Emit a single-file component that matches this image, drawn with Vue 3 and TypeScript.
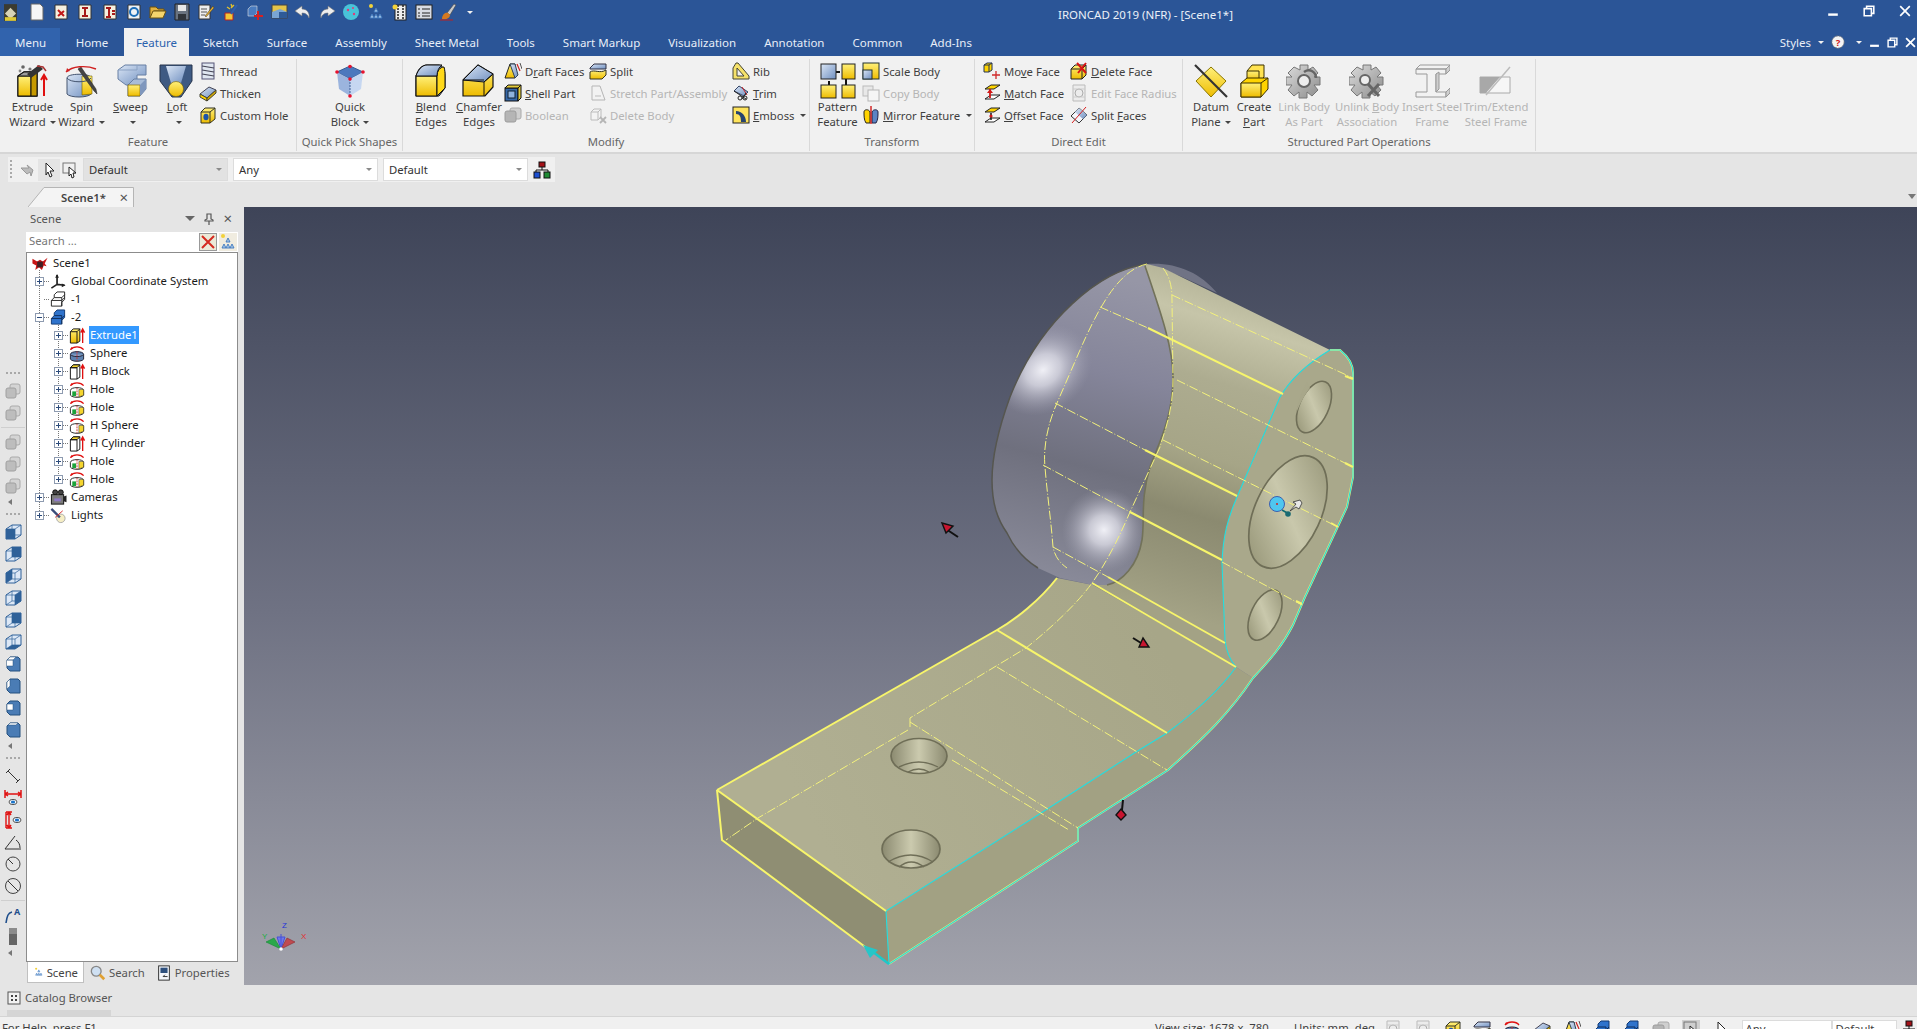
<template>
  <div class="app">
    <!-- shared icon symbols -->
    <svg class="defs" aria-hidden="true">
      <defs>
        <linearGradient id="gy" x1="0" y1="0" x2="0" y2="1"><stop offset="0" stop-color="#fff07a" /><stop offset="1" stop-color="#eebc00" /></linearGradient>
        <linearGradient id="gb" x1="0" y1="0" x2="1" y2="1"><stop offset="0" stop-color="#dbe6f5" /><stop offset="1" stop-color="#6f8fc0" /></linearGradient>
        <linearGradient id="gs" x1="0" y1="0" x2="1" y2="1"><stop offset="0" stop-color="#dcdcdc" /><stop offset="1" stop-color="#8c8c8c" /></linearGradient>
        <linearGradient id="gd" x1="0" y1="0" x2="0" y2="1"><stop offset="0" stop-color="#5c7faf" /><stop offset="1" stop-color="#24466f" /></linearGradient>
      </defs>

      <symbol id="extrude" viewBox="0 0 36 36">
        <path d="M3 13l6-4h13v24H3z" fill="url(#gy)" stroke="#111" stroke-width="1.4" />
        <path d="M3 13h13v20H3z" fill="url(#gy)" stroke="#111" />
        <path d="M16 13l6-4v24l-6 0z" fill="#c79a00" stroke="#111" />
        <path d="M3 13l6-4h13l-6 4z" fill="#9b9b9b" stroke="#111" />
        <path d="M29 33V14m-3 3l3-5 3 5" fill="none" stroke="#e01010" stroke-width="2" />
        <path d="M12 11l12-9 4 4-12 9z" fill="#333" />
        <path d="M22 3l6 1 3 4" fill="none" stroke="#a33" stroke-width="1.5" />
        <circle cx="8" cy="4" r="1.8" fill="#666" /><circle cx="15" cy="6" r="1.6" fill="#777" /><circle cx="5" cy="8" r="1.4" fill="#888" />
      </symbol>
      <symbol id="spin" viewBox="0 0 36 36">
        <path d="M3 15c0-5 24-5 24 0v16c-3 4-21 4-24 0z" fill="url(#gb)" stroke="#44546f" />
        <path d="M18 13h10v18l-10 1z" fill="url(#gy)" stroke="#6c5a00" stroke-width=".6" />
        <path d="M3 15c3 5 21 5 24 0" fill="none" stroke="#44546f" />
        <path d="M14 6l16 22 3 3-1-5L17 4z" fill="#444" stroke="#222" stroke-width=".5" />
        <path d="M2 9C8 3 22 2 32 6" fill="none" stroke="#d02020" stroke-width="1.4" />
        <path d="M2 9l1-4 3 3" fill="#d02020" />
      </symbol>
      <symbol id="sweep" viewBox="0 0 36 36">
        <path d="M5 16V7l7-5h21v10l-9 0v10l-11 0z" fill="url(#gb)" stroke="#667ea3" />
        <path d="M5 7h19V2" fill="none" stroke="#8ba2c4" />
        <path d="M15 22l6-6h12v10l-6 7H15z" fill="#a8bcd8" stroke="#667ea3" />
        <path d="M15 22h12v11H15z" fill="url(#gy)" stroke="#8a6f00" stroke-width=".7" />
        <path d="M27 22l6-6v10l-6 7z" fill="#7f97bd" />
      </symbol>
      <symbol id="loft" viewBox="0 0 36 36">
        <path d="M1 2h32v16L22 34H13L1 18z" fill="#3e5a83" stroke="#26344c" />
        <path d="M7 3h20l-5 17H12z" fill="url(#gb)" />
        <circle cx="17" cy="26" r="7.5" fill="url(#gy)" stroke="#7a6000" stroke-width=".6" />
      </symbol>
      <symbol id="block" viewBox="0 0 36 36">
        <path d="M5 9l13-6 13 6-13 7z" fill="#4c78bd" stroke="#355c96" />
        <path d="M5 9l13 7v17L7 26z" fill="#9bb4de" />
        <path d="M18 16l13-7-2 17-11 7z" fill="#c6d7f1" />
        <path d="M18 16v17" stroke="#3c5f96" stroke-dasharray="2 1" />
        <g fill="#e8122d"><circle cx="5" cy="9" r="1.8" /><circle cx="18" cy="3.5" r="1.8" /><circle cx="31" cy="9" r="1.8" /><circle cx="18" cy="16" r="1.8" /><circle cx="18" cy="33" r="1.8" /></g>
      </symbol>
      <symbol id="blend" viewBox="0 0 36 36">
        <path d="M3 33V13c2-7 5-10 10-11h13c5 1 6 6 6 11v12l-6 8z" fill="#8a9fbd" stroke="#111" />
        <path d="M3 33V13h21v20z" fill="url(#gy)" stroke="#111" stroke-width="1.2" />
        <path d="M24 13c0-5 3-9 7-9 1 3 1 6 1 9v12l-8 8z" fill="#ffd91a" stroke="#111" />
        <path d="M3 13c2-6 6-11 11-11h15c-3 2-5 6-5 11z" fill="url(#gb)" stroke="#111" />
      </symbol>
      <symbol id="chamfer" viewBox="0 0 36 36">
        <path d="M2 17L17 2l15 9v13l-8 9H2z" fill="url(#gy)" stroke="#111" stroke-width="1.2" />
        <path d="M2 17L17 2l15 9-9 8z" fill="url(#gb)" stroke="#111" />
        <path d="M23 19v14M2 17h21M23 19l9-8" stroke="#111" fill="none" />
      </symbol>
      <symbol id="pattern" viewBox="0 0 36 36">
        <path d="M8 9h12M9 18v10M26 11v12" stroke="#111" stroke-width="2" />
        <rect x="1" y="1" width="15" height="15" fill="url(#gb)" stroke="#222" />
        <rect x="22" y="1" width="13" height="15" fill="url(#gy)" stroke="#222" />
        <rect x="1" y="22" width="15" height="13" fill="url(#gy)" stroke="#222" />
        <rect x="22" y="22" width="13" height="13" fill="url(#gy)" stroke="#222" />
      </symbol>
      <symbol id="datum" viewBox="0 0 36 36">
        <path d="M18 4l15 14-15 16L3 18z" fill="url(#gy)" stroke="#8b7700" />
        <path d="M2 2l32 32" stroke="#333" stroke-width="2.2" />
      </symbol>
      <symbol id="part" viewBox="0 0 36 36">
        <path d="M11 8l5-6h12v12l-5 5z" fill="#ffe352" stroke="#3c3000" />
        <path d="M11 8h12v11H11z" fill="url(#gy)" stroke="#3c3000" />
        <path d="M5 20l6-5h21v11l-7 8H5z" fill="#ffd400" stroke="#3c3000" />
        <path d="M5 20h20v14H5z" fill="url(#gy)" stroke="#3c3000" />
        <path d="M25 20l7-5" stroke="#3c3000" />
      </symbol>
      <symbol id="link" viewBox="0 0 36 36">
        <path d="M14 2h8v5l5-3 5 6-4 4h6v8h-6l4 5-6 6-5-4v6h-8v-6l-5 4-6-6 4-5H0v-8h6l-4-4 6-6 6 3z" fill="url(#gs)" stroke="#777" />
        <circle cx="18" cy="18" r="6" fill="#eee" stroke="#666" stroke-width="2" />
        <path d="M18 9c6-4 12 0 12 6" fill="none" stroke="#666" stroke-width="2.5" />
      </symbol>
      <symbol id="unlink" viewBox="0 0 36 36">
        <path d="M14 2h8v5l5-3 5 6-4 4h6v8h-6l4 5-6 6-5-4v6h-8v-6l-5 4-6-6 4-5H0v-8h6l-4-4 6-6 6 3z" fill="url(#gs)" stroke="#777" />
        <circle cx="16" cy="17" r="5" fill="#eee" stroke="#666" stroke-width="2" />
        <path d="M19 21l11 12m0-12L19 33" stroke="#666" stroke-width="3" />
      </symbol>
      <symbol id="beam" viewBox="0 0 36 36">
        <path d="M2 6l4-4h30l-4 4zM2 6h30v5H22v18h10v5H2v-5h11V11H2z" fill="#f2f2f2" stroke="#999" />
        <path d="M32 6l4-4v5l-4 4zM32 29l4-4v5l-4 4zM22 11l3-2v17l-3 3z" fill="#cfcfcf" stroke="#999" />
      </symbol>
      <symbol id="trimbeam" viewBox="0 0 36 36">
        <path d="M2 14h30v16H2z" fill="#f6f6f6" stroke="#aaa" />
        <path d="M2 14h20L8 30H2z" fill="#a8a8a8" />
        <path d="M8 32L32 4" stroke="#bbb" stroke-width="1.5" />
      </symbol>

      <symbol id="thread" viewBox="0 0 18 18">
        <rect x="3" y="1" width="12" height="16" fill="#dfe6f0" stroke="#557" />
        <path d="M3 4l12 2M3 8l12 2M3 12l12 2" stroke="#445" stroke-width="1.2" />
      </symbol>
      <symbol id="thicken" viewBox="0 0 18 18">
        <path d="M1 10l9-7 7 3-9 8z" fill="url(#gb)" stroke="#445" />
        <path d="M1 10l7 4v3l-7-4z" fill="#ffd400" stroke="#443" />
        <path d="M8 14l9-8v3l-9 8z" fill="#d2a800" stroke="#443" />
      </symbol>
      <symbol id="chole" viewBox="0 0 18 18">
        <path d="M2 6l4-4h10v11l-5 4H2z" fill="url(#gy)" stroke="#332" />
        <path d="M2 6h9v11M11 6l5-4" fill="none" stroke="#332" />
        <ellipse cx="7" cy="11" rx="2.6" ry="3.2" fill="#1c54a8" />
      </symbol>
      <symbol id="draft" viewBox="0 0 18 18">
        <path d="M1 16L6 2h5v14z" fill="url(#gy)" stroke="#222" />
        <path d="M6 2l5 14 3-3L11 2z" fill="url(#gb)" stroke="#345" />
        <path d="M13 2l3 7" stroke="#c22" stroke-width="1.2" /><path d="M16 1l2 6" stroke="#555" />
      </symbol>
      <symbol id="shell" viewBox="0 0 18 18">
        <rect x="1" y="4" width="13" height="13" fill="#3668a8" stroke="#111" />
        <path d="M1 4l3-3h13l-3 3zM14 4l3-3v13l-3 3z" fill="#e3cb3a" stroke="#111" />
        <rect x="4" y="7" width="7" height="7" fill="#8fb3de" stroke="#123" />
      </symbol>
      <symbol id="boolean" viewBox="0 0 18 18">
        <rect x="6" y="2" width="11" height="11" rx="2" fill="#cfcfcf" stroke="#aaa" />
        <rect x="1" y="5" width="11" height="11" rx="2" fill="#b5b5b5" stroke="#9c9c9c" />
      </symbol>
      <symbol id="split" viewBox="0 0 18 18">
        <path d="M1 6l4-4h12v5H1z" fill="url(#gb)" stroke="#334" />
        <path d="M1 10c4-3 10 2 16-2v5l-4 4H1z" fill="url(#gy)" stroke="#332" />
      </symbol>
      <symbol id="stretch" viewBox="0 0 18 18">
        <path d="M3 2h8l5 14H3z" fill="#f2f2f2" stroke="#b5b5b5" /><path d="M6 12h6" stroke="#bbb" />
      </symbol>
      <symbol id="delbody" viewBox="0 0 18 18">
        <path d="M2 6l3-3h7v8l-3 3H2z" fill="#f3f3f3" stroke="#bbb" /><path d="M2 6h7v8M9 6l3-3" fill="none" stroke="#bbb" />
        <path d="M11 11l6 6m0-6l-6 6" stroke="#b5b5b5" stroke-width="1.8" />
      </symbol>
      <symbol id="rib" viewBox="0 0 18 18">
        <path d="M1 17V6l3-5h2l11 13v3z" fill="#f5e16a" stroke="#443" />
        <path d="M5 14V6l7 8z" fill="#f0f0f0" stroke="#443" />
      </symbol>
      <symbol id="trim" viewBox="0 0 18 18">
        <path d="M2 7l5-5 9 6-4 4z" fill="url(#gb)" stroke="#346" /><path d="M10 3l5 8" stroke="#c22" />
        <circle cx="8" cy="14" r="2" fill="none" stroke="#222" /><circle cx="13" cy="14" r="2" fill="none" stroke="#222" />
        <path d="M2 7l12 8M10 15l4-6" stroke="#222" />
      </symbol>
      <symbol id="emboss" viewBox="0 0 18 18">
        <rect x="1" y="1" width="16" height="16" fill="#ffe45c" stroke="#222" />
        <path d="M4 5c6 0 10 5 10 11H9C9 11 8 8 4 8z" fill="#27446f" />
      </symbol>
      <symbol id="scale" viewBox="0 0 18 18">
        <rect x="1" y="1" width="16" height="16" fill="url(#gy)" stroke="#233" />
        <rect x="1" y="8" width="9" height="9" fill="url(#gb)" stroke="#233" />
      </symbol>
      <symbol id="copy" viewBox="0 0 18 18">
        <rect x="1" y="2" width="10" height="10" fill="#e8e8e8" stroke="#bbb" /><rect x="6" y="6" width="11" height="11" fill="#f5f5f5" stroke="#b5b5b5" />
      </symbol>
      <symbol id="mirror" viewBox="0 0 18 18">
        <path d="M2 6c0-3 5-3 6 0v11H4c-2-3-2-7-2-11z" fill="#ffd400" stroke="#222" />
        <path d="M16 6c0-3-5-3-6 0v11h4c2-3 2-7 2-11z" fill="#5b84c4" stroke="#224" />
        <path d="M9 0v18" stroke="#d01818" stroke-width="1.4" />
      </symbol>
      <symbol id="moveface" viewBox="0 0 18 18">
        <path d="M1 3l3-2h5v7l-3 2H1z" fill="#ffd400" stroke="#235" /><path d="M1 3h5v7M6 3l3-2" fill="none" stroke="#235" />
        <path d="M13 9v8M9 13h8" stroke="#d02a2a" stroke-width="1.3" />
      </symbol>
      <symbol id="matchface" viewBox="0 0 18 18">
        <path d="M2 5l6-4h9l-6 4z" fill="#ffd400" stroke="#222" />
        <path d="M2 15l6-4h9l-6 4z" fill="#fff" stroke="#222" /><path d="M7 5v9" stroke="#d01818" stroke-width="1.8" /><path d="M4 9l3-4 3 4" fill="#d01818" />
      </symbol>
      <symbol id="offface" viewBox="0 0 18 18">
        <path d="M2 6l6-4h9l-6 4z" fill="#ffd400" stroke="#222" />
        <path d="M2 16l6-4h9l-6 4z" fill="#fff" stroke="#222" /><path d="M8 7v7" stroke="#222" stroke-width="1.6" /><circle cx="8" cy="10" r="1.6" fill="#d01818" />
      </symbol>
      <symbol id="delface" viewBox="0 0 18 18">
        <path d="M1 7l4-4h11v10l-4 4H1z" fill="url(#gy)" stroke="#222" /><path d="M1 7h11v10M12 7l4-4" fill="none" stroke="#222" />
        <path d="M7 1l9 10M16 1L8 11" stroke="#d81414" stroke-width="2" />
      </symbol>
      <symbol id="radius" viewBox="0 0 18 18">
        <path d="M3 1h12v16H3z" fill="#ececec" stroke="#bbb" /><circle cx="9" cy="9" r="4" fill="none" stroke="#aaa" /><path d="M3 5h12M3 13h12" stroke="#ccc" />
      </symbol>
      <symbol id="splitface" viewBox="0 0 18 18">
        <path d="M1 10l8-8 8 7-8 8z" fill="#f4f6fb" stroke="#333" /><path d="M5 6l8 7 4-4-8-7z" fill="url(#gb)" />
        <path d="M2 17L16 1" stroke="#d81e1e" />
      </symbol>

      <symbol id="doc" viewBox="0 0 18 18"><path d="M3 1h9l3 3v13H3z" fill="#f6f6f6" stroke="#666" /></symbol>
      <symbol id="docx" viewBox="0 0 18 18"><path d="M3 2h12v14H3z" fill="#f5f0e0" stroke="#333" /><path d="M6 7l6 6m0-5l-6 5" stroke="#c01818" stroke-width="2" /></symbol>
      <symbol id="doci" viewBox="0 0 18 18"><path d="M3 2h12v14H3z" fill="#f5f0e0" stroke="#333" /><path d="M6 5h6M9 5v8M6 13h6" stroke="#a61a1a" stroke-width="2" /></symbol>
      <symbol id="docl" viewBox="0 0 18 18"><path d="M3 2h12v14H3z" fill="#f5f0e0" stroke="#333" /><path d="M5 5h5M8 5v9M5 14h5M11 8h3M11 11h3" stroke="#a61a1a" stroke-width="2" /></symbol>
      <symbol id="docb" viewBox="0 0 18 18"><path d="M3 2h12v14H3z" fill="#eef2f6" stroke="#333" /><circle cx="9" cy="9" r="4" fill="none" stroke="#1e6fb8" stroke-width="2" /></symbol>
      <symbol id="open" viewBox="0 0 18 18"><path d="M1 4h6l2 2h6v2H5L1 15z" fill="#e3b341" stroke="#6c5210" /><path d="M4 8h13l-3 7H1z" fill="#f5d56d" stroke="#6c5210" /></symbol>
      <symbol id="save" viewBox="0 0 18 18"><path d="M2 1h14v16H2z" fill="#6a7380" stroke="#222" /><rect x="5" y="2" width="8" height="6" fill="#e8e8e8" /><rect x="5" y="11" width="8" height="6" fill="#30343a" /></symbol>
      <symbol id="edit" viewBox="0 0 18 18"><path d="M2 2h11v14H2z" fill="#eee" stroke="#333" /><path d="M4 6h6M4 9h6M4 12h4" stroke="#555" /><path d="M8 13L16 3l1 2-8 9z" fill="#e4ad2d" stroke="#333" stroke-width=".5" /></symbol>
      <symbol id="magic" viewBox="0 0 18 18"><path d="M3 10h8v7H3z" fill="#f3c636" stroke="#b32222" /><path d="M9 11l6-9" stroke="#2e5fae" stroke-width="2" /><path d="M9 1l1 3M12 2l-3 3M5 4l3 2" stroke="#e4c22a" stroke-width="1.3" /></symbol>
      <symbol id="addcube" viewBox="0 0 18 18"><path d="M2 6l3-3h6v7l-3 3H2z" fill="#4a7cc0" stroke="#ddd" stroke-width=".6" /><path d="M12 8v9M8 13h9" stroke="#d92020" stroke-width="2" /></symbol>
      <symbol id="grid" viewBox="0 0 18 18"><rect x="2" y="2" width="15" height="13" fill="#e4c54a" stroke="#444" /><path d="M2 9l8-3 7 3v6H2z" fill="#7aa5d4" /><rect x="9" y="9" width="8" height="6" fill="#2e5a97" /></symbol>
      <symbol id="undo" viewBox="0 0 18 18"><path d="M8 3L1 8l7 5v-3c4 0 6 2 7 5 1-5-2-9-7-9z" fill="#eee" stroke="#777" stroke-width=".6" /></symbol>
      <symbol id="redo" viewBox="0 0 18 18"><path d="M10 3l7 5-7 5v-3c-4 0-6 2-7 5-1-5 2-9 7-9z" fill="#eee" stroke="#777" stroke-width=".6" /></symbol>
      <symbol id="globe" viewBox="0 0 18 18"><circle cx="9" cy="9" r="8" fill="#49c3d8" /><circle cx="6" cy="7" r="1.2" fill="#e23a7a" /><circle cx="12" cy="11" r="1.2" fill="#e23a7a" /><circle cx="11" cy="5" r="1" fill="#e23a7a" /></symbol>
      <symbol id="tree" viewBox="0 0 18 18"><g fill="#a8c8ea" stroke="#3f78bd" stroke-width=".9"><path d="M9 5l2 4H7zM5 11l2 4H3zM13 11l2 4h-4z" /><path d="M9 11l2 4H7z" /></g><circle cx="4" cy="3" r="2" fill="#f2d23a" /></symbol>
      <symbol id="film" viewBox="0 0 18 18"><rect x="4" y="2" width="11" height="15" fill="#eee" stroke="#222" /><path d="M7 2v15M12 2v15" stroke="#222" stroke-width="1.5" stroke-dasharray="2 1" /><circle cx="4" cy="4" r="2.5" fill="#f2d23a" /></symbol>
      <symbol id="list" viewBox="0 0 18 18"><rect x="1" y="2" width="16" height="14" fill="#d8dce4" stroke="#222" /><path d="M3 6h2M7 6h8M3 10h2M7 10h8M3 13h2M7 13h8" stroke="#222" /></symbol>
      <symbol id="brush" viewBox="0 0 18 18"><path d="M8 10l7-9 2 1-6 10z" fill="#c9c9c9" stroke="#444" stroke-width=".6" /><path d="M3 16c0-4 3-7 6-6l2 2c0 3-4 5-8 4z" fill="#d6791f" /><path d="M1 17h13" stroke="#c02020" /></symbol>
      <symbol id="logo" viewBox="0 0 14 18"><rect width="14" height="18" fill="#3b3b30" /><path d="M1 10l6-6 6 6-6 6z" fill="#d6d2b5" /><path d="M1 14h12v4H1z" fill="#ddc937" /></symbol>

      <symbol id="arrowsel" viewBox="0 0 18 18"><path d="M2 7h8l-2-3 6 5-2 6-1-4-3 2z" fill="#bbb" stroke="#999" /></symbol>
      <symbol id="cursor" viewBox="0 0 18 18"><path d="M6 2l8 8h-4l2 5-2 1-2-5-2 3z" fill="#fff" stroke="#222" /></symbol>
      <symbol id="selbox" viewBox="0 0 18 18"><rect x="2" y="2" width="12" height="10" fill="none" stroke="#777" /><path d="M8 6l7 6h-3l1 4-2 1-1-4-2 2z" fill="#fff" stroke="#222" /></symbol>
      <symbol id="assembly" viewBox="0 0 18 18"><rect x="6" y="1" width="6" height="5" fill="#a31218" stroke="#111" /><path d="M9 6v3M3 9h12M3 9v2M15 9v2" stroke="#111" /><rect x="1" y="11" width="6" height="6" fill="#1c4fd0" stroke="#111" /><rect x="11" y="11" width="6" height="6" fill="#1e8a34" stroke="#111" /></symbol>

      <symbol id="t-root" viewBox="0 0 18 18"><path d="M1 4l5 3 3-2 3 2 5-4-3 6 2 3-3-1-2 5-3-3-4 3 1-5-4-2z" fill="#c81414" /><path d="M6 7l6 0v6H6z" fill="#402025" /></symbol>
      <symbol id="t-axis" viewBox="0 0 18 18"><path d="M8 2v10M8 12l8 1M8 12l-6 4" stroke="#222" stroke-width="1.8" fill="none" /><path d="M6 5l2-4 2 4zM13 11l4 2-4 2z" fill="#222" /></symbol>
      <symbol id="t-part" viewBox="0 0 18 18"><path d="M2 10l3-3V4l3-3h8v8l-3 3v4H2z" fill="#fff" stroke="#222" /><path d="M2 10h11v6M13 10l3-3M5 7h8v3M13 7l3-3" fill="none" stroke="#222" /></symbol>
      <symbol id="t-partb" viewBox="0 0 18 18"><path d="M2 10l3-3V4l3-3h8v8l-3 3v4H2z" fill="#2f73cc" stroke="#123a75" /><path d="M2 10h11v6M13 10l3-3M5 7h8v3" fill="none" stroke="#0e2c58" /></symbol>
      <symbol id="t-ext" viewBox="0 0 18 18"><path d="M2 5l3-3h7v13l-3 2H2z" fill="url(#gy)" stroke="#111" /><path d="M2 5h7v12M9 5l3-3" fill="none" stroke="#111" /><path d="M15 17V3m-2 3l2-4 2 4" fill="none" stroke="#e01010" stroke-width="1.4" /></symbol>
      <symbol id="t-hbox" viewBox="0 0 18 18"><path d="M2 5l3-3h7v13l-3 2H2z" fill="#fff" stroke="#111" /><path d="M2 5l3-3h7l-3 3z" fill="#f5d52e" stroke="#111" /><path d="M2 5h7v12" fill="none" stroke="#111" /><path d="M15 17V3m-2 3l2-4 2 4" fill="none" stroke="#e01010" stroke-width="1.4" /></symbol>
      <symbol id="t-sph" viewBox="0 0 18 18"><path d="M2 10c0-4 14-4 14 0v5c-2 3-12 3-14 0z" fill="#5d82b0" stroke="#223" /><path d="M2 10c2 3 12 3 14 0" fill="#8aa6cc" stroke="#223" /><path d="M9 7v10" stroke="#c33" stroke-dasharray="2 1" /><path d="M2 5c3-4 11-4 14 0" fill="none" stroke="#e01010" stroke-width="1.3" /><path d="M2 5l1-3 2 2z" fill="#e01010" /></symbol>
      <symbol id="t-hole" viewBox="0 0 18 18"><path d="M2 10c0-4 14-4 14 0v5c-2 3-12 3-14 0z" fill="#fff" stroke="#222" /><path d="M11 9h5v6l-5 2z" fill="#f5d52e" stroke="#222" stroke-width=".5" /><rect x="4" y="11" width="4" height="5" fill="#1ba33a" /><path d="M2 5c3-4 11-4 14 0" fill="none" stroke="#e01010" stroke-width="1.3" /><path d="M2 5l1-3 2 2z" fill="#e01010" /><path d="M9 7v10" stroke="#c33" stroke-dasharray="2 1" /></symbol>
      <symbol id="t-hsph" viewBox="0 0 18 18"><path d="M2 10c0-4 14-4 14 0v5c-2 3-12 3-14 0z" fill="#fff" stroke="#222" /><path d="M11 9h5v6l-5 2z" fill="#f5d52e" stroke="#222" stroke-width=".5" /><path d="M2 5c3-4 11-4 14 0" fill="none" stroke="#e01010" stroke-width="1.3" /><path d="M2 5l1-3 2 2z" fill="#e01010" /><path d="M9 7v10" stroke="#c33" stroke-dasharray="2 1" /></symbol>
      <symbol id="t-cam" viewBox="0 0 18 18"><circle cx="6" cy="3.5" r="2.6" fill="#444" stroke="#111" /><circle cx="12" cy="3.5" r="2.6" fill="#444" stroke="#111" /><rect x="2" y="6" width="13" height="10" fill="#7c7c7c" stroke="#111" /><rect x="5" y="10" width="7" height="3" fill="#8f7ac7" /><path d="M15 8l3-1v7l-3-1z" fill="#222" /></symbol>
      <symbol id="t-light" viewBox="0 0 18 18"><circle cx="12" cy="12" r="4.5" fill="#f6eec4" stroke="#aaa" /><path d="M2 2l9 9" stroke="#3b4d7a" stroke-width="2.4" /><path d="M6 11l8-7" stroke="#d62c2c" /></symbol>
      <symbol id="plus" viewBox="0 0 9 9"><rect x=".5" y=".5" width="8" height="8" fill="#fff" stroke="#8e9bb0" /><path d="M2 4.5h5M4.5 2v5" stroke="#2b4a7a" /></symbol>
      <symbol id="minus" viewBox="0 0 9 9"><rect x=".5" y=".5" width="8" height="8" fill="#fff" stroke="#8e9bb0" /><path d="M2 4.5h5" stroke="#2b4a7a" /></symbol>
      <symbol id="mag" viewBox="0 0 18 18"><circle cx="7" cy="7" r="5.5" fill="#cfe0f2" stroke="#888" stroke-width="1.5" /><path d="M11 11l5 5" stroke="#e0a030" stroke-width="3" /></symbol>
      <symbol id="props" viewBox="0 0 18 18"><rect x="3" y="1" width="12" height="16" fill="#f4f6fa" stroke="#222" /><rect x="5" y="3" width="8" height="6" fill="#2d4f7d" /><path d="M8 13h5M8 13l2-2" stroke="#222" /></symbol>
      <symbol id="catalog" viewBox="0 0 14 14"><rect x="1" y="1" width="12" height="12" fill="#f2f2f2" stroke="#555" /><path d="M4 4h2v2H4zM8 4h2v2H8zM4 8h2v2H4zM8 8h2v2H8z" fill="#444" /></symbol>
    </svg>

    <header class="titlebar">
      <div class="quick">
        <svg class="logo"><use href="#logo" /></svg>
        <svg v-for="(q, i) in quickIcons" :key="i" class="qicon"><use :href="'#' + q" /></svg>
        <span class="caret white qcaret"></span>
      </div>
      <div class="title">IRONCAD 2019 (NFR) - [Scene1*]</div>
      <div class="winbtns">
        <svg class="win" viewBox="0 0 10 10"><path d="M1 8h8" stroke="#fff" stroke-width="2" /></svg>
        <svg class="win" viewBox="0 0 10 10"><path d="M3 3V1h6v6H7M1 3h6v6H1z" fill="none" stroke="#fff" stroke-width="1.3" /></svg>
        <svg class="win" viewBox="0 0 10 10"><path d="M1 1l8 8m0-8L1 9" stroke="#fff" stroke-width="1.4" /></svg>
      </div>
    </header>

    <nav class="tabs">
      <div
        v-for="t in tabs"
        :key="t"
        class="tab"
        :class="{ menu: t === 'Menu', active: t === 'Feature', home: t === 'Home' }"
      >{{ t }}</div>
      <div class="tabs-right">
        <span class="styles">Styles</span>
        <span class="caret white"></span>
        <svg class="help" viewBox="0 0 16 16"><circle cx="8" cy="8" r="7" fill="#f4f4f4" stroke="#777" stroke-dasharray="2 1" /><text x="8" y="12" text-anchor="middle" font-size="11" font-weight="700" fill="#d01818">?</text></svg>
        <span class="caret white"></span>
        <svg class="win sm" viewBox="0 0 10 10"><path d="M1 8h8" stroke="#fff" stroke-width="2" /></svg>
        <svg class="win sm" viewBox="0 0 10 10"><path d="M3 3V1h6v6H7M1 3h6v6H1z" fill="none" stroke="#fff" stroke-width="1.3" /></svg>
        <svg class="win sm" viewBox="0 0 10 10"><path d="M1 1l8 8m0-8L1 9" stroke="#fff" stroke-width="1.6" /></svg>
      </div>
    </nav>

    <section class="ribbon">
      <div v-for="g in groups" :key="g.label" class="group" :style="{ width: g.width + 'px' }">
        <div class="gbody" :style="{ paddingLeft: g.pad + 'px' }">
          <template v-for="(c, ci) in g.items" :key="ci">
            <div v-if="c.lines" class="big" :class="{ off: c.off }" :style="{ width: c.w + 'px' }">
              <svg class="bigicon"><use :href="'#' + c.icon" /></svg>
              <div v-for="(l, li) in c.lines" :key="li" class="bigline">
                <template v-if="l">{{ mn(l)[0] }}<u>{{ mn(l)[1] }}</u>{{ mn(l)[2] }}</template>
                <span v-if="c.caret && li === c.lines.length - 1" class="caret"></span>
              </div>
            </div>
            <div v-else class="smallcol" :style="{ width: c.w + 'px' }">
              <div v-for="s in c.rows" :key="s.label" class="small" :class="{ off: s.off }">
                <svg class="smicon"><use :href="'#' + s.icon" /></svg>
                <span>{{ mn(s.label)[0] }}<u>{{ mn(s.label)[1] }}</u>{{ mn(s.label)[2] }}</span>
                <span v-if="s.caret" class="caret after"></span>
              </div>
            </div>
          </template>
        </div>
        <div class="glabel">{{ g.label }}</div>
      </div>
    </section>

    <div class="toolrow">
      <div class="toolstrip">
        <span class="grip-v"></span>
        <svg class="tool"><use href="#arrowsel" /></svg>
        <span class="toolon"><svg class="tool"><use href="#cursor" /></svg></span>
        <svg class="tool"><use href="#selbox" /></svg>
        <div class="combo disabled">Default<span class="caret grey"></span></div>
        <div class="combo">Any<span class="caret grey"></span></div>
        <div class="combo">Default<span class="caret grey"></span></div>
        <svg class="tool asm"><use href="#assembly" /></svg>
      </div>
    </div>

    <div class="doctabs">
      <div class="doctab">
        <svg class="docshape" viewBox="0 0 106 20" preserveAspectRatio="none"><path d="M0 20L16 .5H105.5V20" fill="#f4f4f4" stroke="#b5b5b5" /></svg>
        <span class="docname">Scene1*</span><span class="docx">×</span>
      </div>
      <span class="caret dark docmenu"></span>
    </div>

    <main class="main">
      <aside class="strip">
        <template v-for="(s, i) in stripItems" :key="i">
          <div v-if="s.kind === 'grip'" class="sgrip"></div>
          <div v-else-if="s.kind === 'sep'" class="ssep"></div>
          <div v-else-if="s.kind === 'arrow'" class="sarrow"></div>
          <svg v-else-if="s.kind === 'wire'" class="sicon" viewBox="0 0 18 18">
            <path d="M2 6L8 2H17V12L11 16H2Z" fill="#dde8f6" stroke="#2f6199" />
            <path :d="faces[s.face!]" fill="#2f6199" />
            <path d="M2 6H11V16M11 6L17 2M8 2V12H17M8 12L2 16" fill="none" stroke="#2f6199" stroke-width=".7" />
          </svg>
          <svg v-else-if="s.kind === 'solid'" class="sicon" viewBox="0 0 18 18">
            <path d="M3 5L6 2H14L16 4V16H6L3 13Z" fill="#4a7cb5" stroke="#24507f" />
            <path :d="faces[s.face!]" fill="#fff" stroke="#24507f" stroke-width=".5" />
          </svg>
          <svg v-else-if="s.kind === 'ghost'" class="sicon" viewBox="0 0 18 18">
            <rect x="6" y="2" width="10" height="10" rx="2" fill="#d4d4d4" stroke="#aaa" /><rect x="2" y="6" width="10" height="10" rx="2" fill="#bdbdbd" stroke="#a0a0a0" />
          </svg>
          <svg v-else-if="s.kind === 'dim'" class="sicon" viewBox="0 0 18 18" v-html="s.svg"></svg>
        </template>
      </aside>

      <aside class="panel">
        <div class="phead">
          <span class="ptitle">Scene</span>
          <span class="caret dark big-caret"></span>
          <svg class="pin" viewBox="0 0 10 12"><path d="M3 1h4v5l2 1v1H1V7l2-1zM5 8v4" fill="none" stroke="#555" stroke-width="1.2" /></svg>
          <span class="pclose">×</span>
        </div>
        <div class="psearch">
          <span class="sphold">Search ...</span>
          <svg class="sx" viewBox="0 0 18 18"><rect x=".5" y=".5" width="17" height="17" fill="#ece9d8" stroke="#999" /><path d="M3 3l12 12m0-12L3 15" stroke="#d42a20" stroke-width="2" /></svg>
          <svg class="stree"><use href="#tree" /></svg>
        </div>
        <div class="tree">
          <span class="vline l1"></span>
          <span class="vline l2"></span>
          <div
            v-for="(r, i) in treeRows"
            :key="i"
            class="row"
            :class="'lv' + r.level"
          >
            <svg v-if="r.exp" class="exp"><use :href="r.exp === '+' ? '#plus' : '#minus'" /></svg>
            <span v-else-if="r.level > 0" class="noexp"></span>
            <span v-if="r.level > 0" class="hdots"></span>
            <svg class="ticon"><use :href="'#' + r.icon" /></svg>
            <span class="tlabel" :class="{ sel: r.sel }">{{ r.label }}</span>
          </div>
        </div>
        <div class="ptabs">
          <div class="ptab on"><svg class="pticon"><use href="#tree" /></svg>Scene</div>
          <div class="ptab"><svg class="pticon"><use href="#mag" /></svg>Search</div>
          <div class="ptab"><svg class="pticon"><use href="#props" /></svg>Properties</div>
        </div>
      </aside>

      <div class="viewport">
        <svg class="scene" viewBox="244 207 1673 778" width="1673" height="778">
          <defs>
            <linearGradient id="body" gradientUnits="userSpaceOnUse" x1="1190" y1="270" x2="1095" y2="590">
              <stop offset="0" stop-color="#b4b397" />
              <stop offset=".12" stop-color="#c6c5a9" />
              <stop offset=".3" stop-color="#adac90" />
              <stop offset=".52" stop-color="#a6a587" />
              <stop offset=".7" stop-color="#8b8a70" />
              <stop offset=".85" stop-color="#96957a" />
              <stop offset="1" stop-color="#a3a285" />
            </linearGradient>
            <linearGradient id="plate" gradientUnits="userSpaceOnUse" x1="800" y1="800" x2="1150" y2="620">
              <stop offset="0" stop-color="#b0af92" />
              <stop offset="1" stop-color="#a7a688" />
            </linearGradient>
            <linearGradient id="sph" gradientUnits="userSpaceOnUse" x1="1130" y1="280" x2="1050" y2="590">
              <stop offset="0" stop-color="#9696a6" />
              <stop offset=".3" stop-color="#85859a" />
              <stop offset=".6" stop-color="#6f707e" />
              <stop offset="1" stop-color="#8c8d9c" />
            </linearGradient>
            <radialGradient id="glow"><stop offset="0" stop-color="#f0f0f6" /><stop offset=".35" stop-color="#dcdce6" stop-opacity=".8" /><stop offset="1" stop-color="#a0a0b0" stop-opacity="0" /></radialGradient>
            <linearGradient id="holeV" x1="0" y1="0" x2="1" y2="0">
              <stop offset="0" stop-color="#8b8a70" /><stop offset=".5" stop-color="#cbcaae" /><stop offset="1" stop-color="#8b8a70" />
            </linearGradient>
            <linearGradient id="holeR" x1=".75" y1="0" x2=".25" y2="1">
              <stop offset="0" stop-color="#9c9b7e" /><stop offset=".5" stop-color="#c9c8ac" /><stop offset="1" stop-color="#989779" />
            </linearGradient>
            <clipPath id="sphClip"><path :d="spherePath" /></clipPath>
          </defs>

          <path d="M1147 264C1175 262 1200 272 1217 293L1180 276Z" fill="#707385" />

          <!-- lower plate and faces -->
          <path d="M717 790L997 630C1015 620 1040 600 1057 578L1093 585L1236 667C1215 695 1190 715 1167 733L1136 752L1038 815L886 911Z" fill="url(#plate)" />
          <path d="M886 911L1038 815L1136 752L1167 733C1195 712 1220 690 1236 667L1253 678C1225 720 1195 745 1168 770L1078 828L1078 841L889 964Z" fill="#a2a183" />
          <path d="M717 790L886 911L889 964L722 840Z" fill="#8f8e73" />

          <!-- sphere and cylinder body -->
          <path d="M1147 264L1163 268L1330 350C1305 365 1290 380 1280 397L1237 497C1228 518 1223 535 1222 563L1225 640C1226 650 1230 660 1236 667L1092 583L1107 585C1122 582 1138 565 1142 540C1145 520 1140 500 1150 467C1158 445 1172 420 1173 380C1174 350 1160 310 1145 266Z" fill="url(#body)" />
          <path :d="spherePath" fill="url(#sph)" />
          <g clip-path="url(#sphClip)">
            <ellipse cx="1043" cy="370" rx="52" ry="42" fill="url(#glow)" transform="rotate(-35 1043 370)" />
            <ellipse cx="1104" cy="530" rx="42" ry="42" fill="url(#glow)" />
          </g>
          <path d="M1147 264C1100 270 1040 320 1010 397C998 430 992 455 992 480C992 505 998 520 1007 533C1015 550 1025 560 1038 568" fill="none" stroke="#56564f" stroke-width="1.5" />
          <path d="M1107 585C1122 582 1138 565 1142 540C1145 520 1140 500 1150 467C1158 445 1172 420 1173 380C1174 350 1160 310 1145 266" fill="none" stroke="#72725a" stroke-width="1.6" />

          <!-- end face with its holes -->
          <path :d="facePath" fill="#a9a88b" />
          <ellipse cx="1314" cy="407" rx="14.5" ry="27.5" fill="url(#holeR)" stroke="#6f6e57" stroke-width="1.6" transform="rotate(25 1314 407)" />
          <path d="M1307 382C1301 392 1297 405 1296 414C1298 408 1304 395 1310 388Z" fill="#a8a78a" />
          <ellipse cx="1288" cy="512" rx="33" ry="60" fill="url(#holeR)" stroke="#6f6e57" stroke-width="1.7" transform="rotate(25 1288 512)" />
          <ellipse cx="1265" cy="615" rx="14" ry="27" fill="url(#holeR)" stroke="#6f6e57" stroke-width="1.6" transform="rotate(25 1265 615)" />
          <path d="M1330 350L1340 350C1350 358 1353 365 1353 373L1353 477L1347 507L1305 597L1293 625C1283 645 1270 660 1253 678C1225 720 1195 745 1168 770L1078 828L1078 841L889 964" fill="none" stroke="#eeee70" stroke-width="2" />
          <path d="M1330 350L1340 350C1350 358 1353 365 1353 373L1353 477L1347 507L1305 597L1293 625C1283 645 1270 660 1253 678C1225 720 1195 745 1168 770L1078 828L1078 841L889 964L886 911L1038 815L1136 752L1167 733C1195 712 1220 690 1236 667C1230 660 1226 650 1225 640L1222 563C1223 535 1228 518 1237 497L1280 397C1290 380 1305 365 1330 350Z" fill="none" stroke="#22dfe0" stroke-width="1.1" />

          <!-- plate holes -->
          <ellipse cx="919" cy="756" rx="28" ry="17.5" fill="url(#holeV)" stroke="#6f6e57" stroke-width="1.7" />
          <path d="M899 767Q919 757 938 767M908 772Q919 766 929 772" fill="none" stroke="#6f6e57" stroke-width="1.4" />
          <ellipse cx="911" cy="849" rx="29" ry="19" fill="url(#holeV)" stroke="#6f6e57" stroke-width="1.7" />
          <path d="M888 862Q911 848 933 862M899 867Q911 857 924 867" fill="none" stroke="#6f6e57" stroke-width="1.4" />

          <!-- solid edges -->
          <g fill="none" stroke="#f7f56b" stroke-width="2">
            <path d="M717 790L997 630C1015 620 1040 600 1057 578" />
            <path d="M717 790L886 911" />
            <path d="M717 790L722 840L872 952" />
            <path d="M997 630L1167 733" />
            <path d="M1092 583L1236 667" />
            <path d="M1108 577L1225 643" />
            <path d="M1148 328L1283 394" />
            <path d="M1145 450L1237 496" />
            <path d="M1130 512L1222 560" />
            <path d="M1345 376L1353 379M1345 463L1353 467M1331 523L1338 527M1296 601L1302 604" />
          </g>

          <!-- hidden edges, dash dot -->
          <g fill="none" stroke="#f4f27c" stroke-width="1" stroke-dasharray="9 2 1 2">
            <path d="M1147 264C1120 270 1100 303 1077 357L1057 403C1048 423 1043 447 1045 467C1047 493 1051 520 1053 547C1055 557 1060 563 1067 568" />
            <path d="M1163 268C1171 278 1172 290 1172 300L1173 380C1173 410 1165 430 1160 447L1130 512C1118 540 1105 565 1092 583C1080 600 1055 625 1026 648L910 718" />
            <path d="M1100 307L1148 328M1055 403L1145 450M1043 465L1130 512M1053 547L1108 577" />
            <path d="M1172 295L1353 378M1177 380L1353 467M1163 440L1338 527M1222 562L1302 605" />
            <path d="M908 730L758 818L726 840" />
            <path d="M997 667L1167 770M910 722L1078 828M952 760L1069 830M910 718L910 729" />
          </g>

          <!-- handles -->
          <path d="M958 537L946 529" stroke="#111" stroke-width="2" />
          <path d="M942 523L953 526L946 533Z" fill="#c81530" stroke="#111" stroke-width="1.4" />
          <path d="M1133 638L1141 643" stroke="#111" stroke-width="2" />
          <path d="M1143 638L1149 647L1139 647Z" fill="#c81530" stroke="#111" stroke-width="1.4" />
          <path d="M1123 800L1122 810" stroke="#111" stroke-width="2" />
          <path d="M1121 809L1126 815L1121 820L1116 815Z" fill="#c81530" stroke="#111" stroke-width="1.4" />
          <path d="M889 964L873 952" stroke="#1cc8c8" stroke-width="2.5" />
          <path d="M863 945L878 950L870 958Z" fill="#25c6c8" />
          <circle cx="1277" cy="504" r="7.5" fill="#4fc6ef" stroke="#3a5fb0" />
          <circle cx="1277" cy="504" r="1" fill="#d02020" />
          <path d="M1282 510L1289 514" stroke="#0f6a70" stroke-width="1.5" />
          <circle cx="1288" cy="514" r="2.8" fill="#196a72" />
          <path d="M1290 511L1296 504L1293 502L1300 500L1302 503L1299 509L1296 507Z" fill="#e8e8e8" stroke="#333" stroke-width=".8" />

          <!-- triad -->
          <path d="M281 949L277 937L285 937Z M281 949V934" fill="#6f78e8" stroke="#4650d8" />
          <path d="M281 949L266 942L274 938Z" fill="#2aa84a" stroke="#148a34" stroke-width=".6" />
          <path d="M281 949L295 942L287 938Z" fill="#c04a50" stroke="#8c2a30" stroke-width=".6" />
          <circle cx="281" cy="949" r="1.8" fill="#fff" />
          <text class="triad" x="282" y="928" fill="#2433d8">Z</text>
          <text class="triad" x="262" y="939" fill="#18b040">Y</text>
          <text class="triad" x="301" y="939" fill="#e03030">X</text>
        </svg>
      </div>
    </main>

    <div class="catalog">
      <div class="catitem">
        <svg class="caticon"><use href="#catalog" /></svg>
        <span class="catname">Catalog Browser</span>
      </div>
    </div>

    <footer class="status">
      <span class="help-text">For Help, press F1</span>
      <span class="viewsize">View size: 1678 x&nbsp;&nbsp;780</span>
      <span class="units">Units: mm, deg</span>
      <svg v-for="(s, i) in statusIcons" :key="i" class="sticon" :class="{ onbg: s === 'selbox' }"><use :href="'#' + s" /></svg>
      <div class="stcombo any">Any</div>
      <div class="stcombo def">Default</div>
      <svg class="sticon"><use href="#assembly" /></svg>
    </footer>
  </div>
</template>

<script setup lang="ts">
interface SmallBtn {
  icon: string;
  label: string;
  off?: boolean;
  caret?: boolean;
}

interface Column {
  w: number;
  icon?: string;
  lines?: string[];
  caret?: boolean;
  off?: boolean;
  rows?: SmallBtn[];
}

interface Group {
  label: string;
  width: number;
  pad: number;
  items: Column[];
}

interface TreeRow {
  level: number;
  icon: string;
  label: string;
  exp?: string;
  sel?: boolean;
}

interface StripItem {
  kind: string;
  face?: string;
  svg?: string;
}

const quickIcons = ['doc', 'docx', 'doci', 'docl', 'docb', 'open', 'save', 'edit', 'magic', 'addcube', 'grid', 'undo', 'redo', 'globe', 'tree', 'film', 'list', 'brush'];

const tabs = ['Menu', 'Home', 'Feature', 'Sketch', 'Surface', 'Assembly', 'Sheet Metal', 'Tools', 'Smart Markup', 'Visualization', 'Annotation', 'Common', 'Add-Ins'];

// "&" marks the letter that gets the keyboard underline
const groups: Group[] = [
  {
    label: 'Feature', width: 297, pad: 8,
    items: [
      { w: 49, icon: 'extrude', lines: ['Extrude', 'Wizard'], caret: true },
      { w: 49, icon: 'spin', lines: ['Spin', 'Wizard'], caret: true },
      { w: 49, icon: 'sweep', lines: ['&Sweep', ''], caret: true },
      { w: 44, icon: 'loft', lines: ['&Loft', ''], caret: true },
      { w: 96, rows: [
        { icon: 'thread', label: 'Thread' },
        { icon: 'thicken', label: 'Thicken' },
        { icon: 'chole', label: 'Custom Hole' },
      ] },
    ],
  },
  {
    label: 'Quick Pick Shapes', width: 106, pad: 0,
    items: [{ w: 106, icon: 'block', lines: ['Quick', 'Block'], caret: true }],
  },
  {
    label: 'Modify', width: 407, pad: 5,
    items: [
      { w: 46, icon: 'blend', lines: ['&Blend', 'Edges'] },
      { w: 50, icon: 'chamfer', lines: ['&Chamfer', 'Edges'] },
      { w: 85, rows: [
        { icon: 'draft', label: 'D&raft Faces' },
        { icon: 'shell', label: '&Shell Part' },
        { icon: 'boolean', label: 'Boolean', off: true },
      ] },
      { w: 143, rows: [
        { icon: 'split', label: 'Split' },
        { icon: 'stretch', label: 'Stretch Part/Assembly', off: true },
        { icon: 'delbody', label: 'Delete Body', off: true },
      ] },
      { w: 70, rows: [
        { icon: 'rib', label: 'Rib' },
        { icon: 'trim', label: '&Trim' },
        { icon: 'emboss', label: '&Emboss', caret: true },
      ] },
    ],
  },
  {
    label: 'Transform', width: 165, pad: 3,
    items: [
      { w: 49, icon: 'pattern', lines: ['Pattern', 'Feature'] },
      { w: 110, rows: [
        { icon: 'scale', label: 'Scale Body' },
        { icon: 'copy', label: 'Copy Body', off: true },
        { icon: 'mirror', label: '&Mirror Feature', caret: true },
      ] },
    ],
  },
  {
    label: 'Direct Edit', width: 208, pad: 8,
    items: [
      { w: 87, rows: [
        { icon: 'moveface', label: 'Mo&ve Face' },
        { icon: 'matchface', label: '&Match Face' },
        { icon: 'offface', label: '&Offset Face' },
      ] },
      { w: 110, rows: [
        { icon: 'delface', label: '&Delete Face' },
        { icon: 'radius', label: 'Edit Face Radius', off: true },
        { icon: 'splitface', label: 'Split &Faces' },
      ] },
    ],
  },
  {
    label: 'Structured Part Operations', width: 353, pad: 6,
    items: [
      { w: 44, icon: 'datum', lines: ['Datum', 'Plane'], caret: true },
      { w: 42, icon: 'part', lines: ['Create', '&Part'] },
      { w: 58, icon: 'link', lines: ['Link Body', 'As Part'], off: true },
      { w: 68, icon: 'unlink', lines: ['Unlink &Body', 'Association'], off: true },
      { w: 62, icon: 'beam', lines: ['Insert Steel', 'Frame'], off: true },
      { w: 66, icon: 'trimbeam', lines: ['Trim/Extend', 'Steel Frame'], off: true },
    ],
  },
];

function mn(label: string): string[] {
  const at = label.indexOf('&');
  if (at < 0) return [label, '', ''];
  return [label.slice(0, at), label.charAt(at + 1), label.slice(at + 2)];
}

const faces: Record<string, string> = {
  front: 'M2 6H11V16H2Z',
  back: 'M2 6L8 2V12L2 16Z',
  right: 'M11 6L17 2V12L11 16Z',
  top: 'M8 2H17V12H8Z',
  bottom: 'M2 16L8 12H17L11 16Z',
  a: 'M3 5L6 2H12L9 5H3ZM3 5H9V11H3',
  b: 'M3 5L6 2V9L3 12Z',
  c: 'M3 5H9V11H3Z',
  d: 'M6 2H14L12 4H4Z',
};

const dim = (d: string) => `<path d="${d}" fill="none" stroke="#333" />`;
const eye = (x: number, y: number) => `<ellipse cx="${x}" cy="${y}" rx="4" ry="2.6" fill="#fff" stroke="#555" /><ellipse cx="${x}" cy="${y}" rx="2.2" ry="1.5" fill="#1c74c8" />`;

const stripItems: StripItem[] = [
  { kind: 'grip' }, { kind: 'ghost' }, { kind: 'ghost' }, { kind: 'sep' },
  { kind: 'ghost' }, { kind: 'ghost' }, { kind: 'ghost' }, { kind: 'arrow' }, { kind: 'grip' },
  { kind: 'wire', face: 'front' }, { kind: 'wire', face: 'top' }, { kind: 'wire', face: 'back' },
  { kind: 'wire', face: 'right' }, { kind: 'wire', face: 'top' }, { kind: 'wire', face: 'bottom' },
  { kind: 'solid', face: 'a' }, { kind: 'solid', face: 'b' }, { kind: 'solid', face: 'c' }, { kind: 'solid', face: 'd' },
  { kind: 'arrow' }, { kind: 'grip' },
  { kind: 'dim', svg: dim('M2 6L6 2M12 16L16 12M4 4L14 14') },
  { kind: 'dim', svg: '<path d="M1 1V9M17 1V9M1 5H17M1 5l3-2M1 5l3 2M17 5l-3-2M17 5l-3 2" fill="none" stroke="#e01212" stroke-width="1.5" />' + eye(9, 13) },
  { kind: 'dim', svg: '<path d="M2 1V17M2 1H8M2 17H8M5 1V17M5 1l-2 3M5 1l2 3M5 17l-2-3M5 17l2-3" fill="none" stroke="#e01212" stroke-width="1.4" />' + eye(13, 9) },
  { kind: 'dim', svg: dim('M1 16H17M1 16L11 3M12 7C15 9 16 12 16 15') },
  { kind: 'dim', svg: '<circle cx="9" cy="9" r="7" fill="none" stroke="#444" /><path d="M9 9L4 4" stroke="#333" />' },
  { kind: 'dim', svg: '<circle cx="9" cy="9" r="7.5" fill="none" stroke="#444" /><path d="M4 4L14 14" stroke="#333" />' },
  { kind: 'sep' },
  { kind: 'dim', svg: '<path d="M2 17C3 10 4 7 8 6" fill="none" stroke="#1f4f8c" stroke-width="1.6" /><text x="10" y="9" font-size="9" font-weight="700" fill="#1f4f8c">A</text>' },
  { kind: 'dim', svg: '<rect x="5" y="6" width="8" height="11" fill="#666" /><path d="M5 1h8M5 3h8M5 5h8" stroke="#333" />' },
  { kind: 'arrow' },
];

const treeRows: TreeRow[] = [
  { level: 0, icon: 't-root', label: 'Scene1' },
  { level: 1, icon: 't-axis', label: 'Global Coordinate System', exp: '+' },
  { level: 1, icon: 't-part', label: '-1' },
  { level: 1, icon: 't-partb', label: '-2', exp: '-' },
  { level: 2, icon: 't-ext', label: 'Extrude1', exp: '+', sel: true },
  { level: 2, icon: 't-sph', label: 'Sphere', exp: '+' },
  { level: 2, icon: 't-hbox', label: 'H Block', exp: '+' },
  { level: 2, icon: 't-hole', label: 'Hole', exp: '+' },
  { level: 2, icon: 't-hole', label: 'Hole', exp: '+' },
  { level: 2, icon: 't-hsph', label: 'H Sphere', exp: '+' },
  { level: 2, icon: 't-hbox', label: 'H Cylinder', exp: '+' },
  { level: 2, icon: 't-hole', label: 'Hole', exp: '+' },
  { level: 2, icon: 't-hole', label: 'Hole', exp: '+' },
  { level: 1, icon: 't-cam', label: 'Cameras', exp: '+' },
  { level: 1, icon: 't-light', label: 'Lights', exp: '+' },
];

const statusIcons = ['radius', 'radius', 'chole', 'split', 't-sph', 'thicken', 'draft', 't-partb', 't-partb', 'boolean', 'selbox', 'cursor'];

const spherePath = 'M1147 264C1100 270 1040 320 1010 397C998 430 992 455 992 480C992 505 998 520 1007 533C1015 550 1025 560 1038 568L1060 578L1093 585L1107 585C1122 582 1138 565 1142 540C1145 520 1140 500 1150 467C1158 445 1172 420 1173 380C1174 350 1160 310 1145 266Z';
const facePath = 'M1330 350L1340 350C1350 358 1353 365 1353 373L1353 477L1347 507L1305 597L1293 625C1283 645 1270 660 1253 678L1236 667C1230 660 1226 650 1225 640L1222 563C1223 535 1228 518 1237 497L1280 397C1290 380 1305 365 1330 350Z';
</script>

<style scoped>
.app {
  display: flex;
  flex-direction: column;
  width: 1917px;
  height: 1029px;
  overflow: hidden;
  background: #e5e5e5;
  color: #3f3f3f;
  font-family: "Noto Sans", "Liberation Sans", sans-serif;
  font-size: 11.3px;
}

.defs {
  position: absolute;
  width: 0;
  height: 0;
}

.titlebar {
  display: flex;
  align-items: center;
  flex: 0 0 28px;
  background: #2b5597;
  color: #eaf0f8;
}

.quick {
  display: flex;
  align-items: center;
  width: 1058px;
  padding: 0 0 4px 4px;
  box-sizing: border-box;
}

.logo {
  width: 13px;
  height: 17px;
  margin-right: 11px;
}

.qicon {
  width: 18px;
  height: 18px;
  margin-right: 6.2px;
}

.qcaret {
  margin-left: -6px;
}

.title {
  font-size: 11.5px;
  white-space: nowrap;
}

.winbtns {
  display: flex;
  gap: 24px;
  margin-left: auto;
  padding: 0 6px 6px 0;
}

.win {
  width: 12px;
  height: 12px;
}

.win.sm {
  width: 11px;
  height: 11px;
}

.tabs {
  display: flex;
  flex: 0 0 28px;
  background: #2b5597;
  color: #e8eef7;
  font-size: 11.5px;
}

.tab {
  display: flex;
  align-items: center;
  padding: 0 14px;
  white-space: nowrap;
}

.tab.menu {
  padding: 0 15px;
  width: 60px;
  box-sizing: border-box;
  background: #3163ad;
}

.tab.home {
  width: 64px;
  padding: 0;
  justify-content: center;
  box-sizing: border-box;
}

.tab.active {
  width: 65px;
  padding: 0;
  justify-content: center;
  box-sizing: border-box;
  background: #f1f1f1;
  color: #2b62ad;
}

.tabs-right {
  display: flex;
  align-items: center;
  gap: 7px;
  margin-left: auto;
  padding-right: 1px;
}

.styles {
  margin-right: -4px;
}

.help {
  width: 14px;
  height: 14px;
}

.caret {
  display: inline-block;
  width: 0;
  height: 0;
  margin-left: 4px;
  vertical-align: 2px;
  border-left: 3px solid transparent;
  border-right: 3px solid transparent;
  border-top: 3px solid #444;
}

.caret.white {
  border-top-color: #f2f2f2;
}

.caret.grey {
  border-top-color: #8a8a8a;
}

.caret.after {
  margin-left: 6px;
}

.ribbon {
  display: flex;
  flex: 0 0 98px;
  box-sizing: border-box;
  background: #f1f1f1;
  border-bottom: 2px solid #d6d6d6;
}

.group {
  display: flex;
  flex-direction: column;
  flex-shrink: 0;
  box-sizing: border-box;
  height: 92px;
  margin-top: 3px;
  border-right: 1px solid #d9d9d9;
}

.gbody {
  display: flex;
  height: 75px;
}

.glabel {
  color: #666;
  line-height: 16px;
  text-align: center;
  white-space: nowrap;
}

.big {
  flex-shrink: 0;
  text-align: center;
  white-space: nowrap;
}

.bigicon {
  display: block;
  width: 36px;
  height: 36px;
  margin: 4px auto 0;
}

.bigline {
  height: 15px;
  line-height: 15px;
}

.off {
  color: #b5b5b5;
}

.smallcol {
  flex-shrink: 0;
  margin-top: 1px;
}

.small {
  display: flex;
  align-items: center;
  height: 22px;
  white-space: nowrap;
}

.smicon {
  flex-shrink: 0;
  width: 18px;
  height: 18px;
  margin-right: 3px;
}

u {
  text-underline-offset: 1px;
}

.toolrow {
  flex: 0 0 31px;
  padding: 3px 0 0 8px;
  box-sizing: border-box;
}

.toolstrip {
  display: flex;
  align-items: center;
  width: 547px;
  height: 25px;
  background: #f0f0f0;
}

.grip-v {
  width: 2px;
  height: 20px;
  margin: 0 7px 0 2px;
  background: repeating-linear-gradient(#aaa 0 2px, transparent 2px 4px);
}

.tool {
  display: block;
  width: 18px;
  height: 18px;
}

.toolon {
  display: block;
  margin: 0 1px;
  padding: 2px;
  background: #e4e4e4;
}

.combo {
  display: flex;
  align-items: center;
  justify-content: space-between;
  box-sizing: border-box;
  width: 145px;
  height: 23px;
  margin-left: 5px;
  padding: 0 5px;
  background: #fff;
  border: 1px solid #dcdcdc;
  color: #333;
}

.combo.disabled {
  margin-left: 4px;
  background: #e2e2e2;
}

.asm {
  margin-left: 5px;
}

.doctabs {
  display: flex;
  align-items: flex-end;
  flex: 0 0 22px;
  position: relative;
}

.doctab {
  position: relative;
  display: flex;
  align-items: center;
  justify-content: space-between;
  box-sizing: border-box;
  width: 106px;
  height: 20px;
  margin-left: 28px;
  padding: 0 6px 0 33px;
}

.docshape {
  position: absolute;
  inset: 0;
  width: 100%;
  height: 100%;
}

.docname,
.docx {
  position: relative;
}

.docname {
  font-weight: 600;
  color: #444;
}

.docx {
  font-size: 15px;
  line-height: 15px;
  color: #555;
}

.docmenu {
  position: absolute;
  right: 1px;
  top: 9px;
  border-left-width: 4px;
  border-right-width: 4px;
  border-top-width: 5px;
  border-top-color: #777;
}

.main {
  display: flex;
  flex: 0 0 778px;
}

.strip {
  display: flex;
  flex-direction: column;
  align-items: center;
  flex: 0 0 26px;
  box-sizing: border-box;
  padding-top: 162px;
}

.sgrip {
  flex: 0 0 2px;
  width: 14px;
  margin: 3px 0 6px;
  background: repeating-linear-gradient(90deg, #a8a8a8 0 2px, transparent 2px 4px);
}

.ssep {
  flex: 0 0 1px;
  width: 24px;
  margin: 3px 0;
  background: #cfcfcf;
}

.sarrow {
  flex: 0 0 0;
  width: 0;
  margin: 2px 0 5px -6px;
  border-top: 3px solid transparent;
  border-bottom: 3px solid transparent;
  border-right: 4px solid #777;
}

.sicon {
  flex: 0 0 18px;
  width: 18px;
  height: 18px;
  margin: 2px 0;
}

.panel {
  display: flex;
  flex-direction: column;
  flex: 0 0 212px;
  margin-right: 6px;
}

.phead {
  display: flex;
  align-items: center;
  flex: 0 0 25px;
  box-sizing: border-box;
  padding: 0 6px 2px 4px;
  color: #555;
}

.ptitle {
  margin-right: auto;
}

.big-caret {
  border-left-width: 5px;
  border-right-width: 5px;
  border-top-width: 5px;
  border-top-color: #666;
}

.pin {
  width: 10px;
  height: 12px;
  margin-left: 9px;
}

.pclose {
  margin-left: 9px;
  font-size: 15px;
  line-height: 15px;
  color: #555;
}

.psearch {
  display: flex;
  align-items: center;
  flex: 0 0 20px;
  padding-left: 3px;
  background: #fff;
}

.sphold {
  margin-right: auto;
  padding-bottom: 3px;
  color: #777;
}

.sx {
  width: 18px;
  height: 18px;
  margin-right: 2px;
}

.stree {
  width: 18px;
  height: 18px;
  margin-right: 1px;
  background: #f0ece0;
}

.tree {
  position: relative;
  flex: 0 0 710px;
  box-sizing: border-box;
  padding-top: 1px;
  background: #fff;
  border: 1px solid #8c8c8c;
  color: #1a1a1a;
}

.vline {
  position: absolute;
  width: 0;
  border-left: 1px dotted #777;
}

.vline.l1 {
  left: 12px;
  top: 17px;
  height: 245px;
}

.vline.l2 {
  left: 31px;
  top: 72px;
  height: 155px;
}

.row {
  position: relative;
  display: flex;
  align-items: center;
  height: 18px;
  white-space: nowrap;
}

.lv0 {
  padding-left: 4px;
}

.lv1 {
  padding-left: 8px;
}

.lv2 {
  padding-left: 27px;
}

.exp,
.noexp {
  flex: 0 0 9px;
  width: 9px;
  height: 9px;
}

.hdots {
  width: 5px;
  border-top: 1px dotted #777;
}

.ticon {
  flex: 0 0 18px;
  width: 18px;
  height: 17px;
}

.tlabel {
  margin-left: 3px;
  padding: 0 1px;
  line-height: 18px;
}

.tlabel.sel {
  background: #3399ff;
  color: #fff;
}

.ptabs {
  display: flex;
  flex: 0 0 21px;
  color: #555;
}

.ptab {
  display: flex;
  align-items: center;
  padding: 0 5px 0 6px;
}

.ptab.on {
  width: 57px;
  box-sizing: border-box;
  margin-left: 1px;
  background: #fff;
  border: 1px solid #c0c0c0;
  border-top: 0;
  color: #444;
}

.pticon {
  width: 16px;
  height: 16px;
  margin-right: 3px;
}

.viewport {
  flex: 0 0 1673px;
  height: 778px;
  background: linear-gradient(#3e4458, #6f7283 52%, #a2a3ac);
}

.scene {
  display: block;
}

.triad {
  font-family: "Liberation Sans", sans-serif;
  font-size: 8px;
}

.catalog {
  flex: 0 0 31px;
  box-sizing: border-box;
  padding: 0 0 0 7px;
}

.catitem {
  display: flex;
  align-items: center;
  box-sizing: content-box;
  width: 104px;
  height: 25px;
  color: #555;
  border-bottom: 6px solid #d5d5d5;
}

.catname {
  white-space: nowrap;
}

.caticon {
  flex-shrink: 0;
  width: 14px;
  height: 14px;
  margin-right: 4px;
}

.status {
  display: flex;
  align-items: flex-start;
  flex: 0 0 13px;
  overflow: hidden;
  box-sizing: border-box;
  padding-top: 3px;
  background: #f0f0f0;
  border-top: 1px solid #d4d4d4;
}

.help-text {
  flex: 0 0 1155px;
  padding-left: 2px;
  box-sizing: border-box;
  line-height: 15px;
  white-space: nowrap;
}

.viewsize {
  flex: 0 0 139px;
  line-height: 15px;
  white-space: nowrap;
}

.units {
  flex: 0 0 90px;
  line-height: 15px;
  white-space: nowrap;
}

.sticon {
  flex: 0 0 18px;
  width: 18px;
  height: 18px;
  margin-right: 11.8px;
}

.sticon.onbg {
  background: #cfcfcf;
}

.stcombo {
  flex-shrink: 0;
  box-sizing: border-box;
  height: 18px;
  padding-left: 3px;
  background: #fff;
  border: 1px solid #dcdcdc;
  line-height: 15px;
}

.stcombo.any {
  width: 90px;
}

.stcombo.def {
  width: 65px;
  margin-right: 3px;
}
</style>

<style>
body {
  background: #e5e5e5;
}
</style>
